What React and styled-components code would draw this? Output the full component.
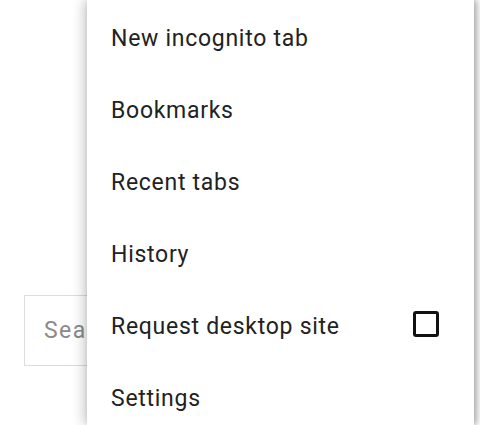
import styled, { createGlobalStyle } from "styled-components";

const GlobalStyle = createGlobalStyle`
  html, body {
    margin: 0;
    padding: 0;
    background: #fff;
    font-family: Roboto, "Noto Sans", sans-serif;
    overflow: hidden;
  }
`;

const Page = styled.div`
  position: relative;
  width: 480px;
  height: 425px;
  overflow: hidden;
  background: #fff;
`;

const SearchBox = styled.div`
  margin: 295px 0 0 24px;
  width: 300px;
  height: 71px;
  box-sizing: border-box;
  border: 1px solid #dcdcdc;
  display: flex;
  align-items: center;
  padding-left: 19px;
  font-size: 23px;
  letter-spacing: 1.4px;
  color: #8a8a8a;
`;

const Menu = styled.div`
  position: absolute;
  top: 0;
  left: 87px;
  width: 387px;
  height: 425px;
  background: #fff;
  box-shadow: -3px 0 12px rgba(0, 0, 0, 0.22), 3px 0 6px rgba(0, 0, 0, 0.28);
  display: flex;
  flex-direction: column;
  padding-top: 2px;
  box-sizing: border-box;
`;

const Item = styled.div`
  height: 72px;
  flex-shrink: 0;
  display: flex;
  align-items: center;
  justify-content: space-between;
  padding: 0 35px 0 24px;
  font-size: 23px;
  color: #222;
  letter-spacing: 0.72px;
`;

const Check = styled.span`
  width: 26px;
  height: 26px;
  box-sizing: border-box;
  border: 3px solid #111;
  border-radius: 3px;
  margin-top: -4px;
`;

const items = [
  "New incognito tab",
  "Bookmarks",
  "Recent tabs",
  "History",
  "Request desktop site",
  "Settings",
];

export default function App() {
  return (
    <Page>
      <GlobalStyle />
      <SearchBox>Search</SearchBox>
      <Menu>
        {items.map((label) => (
          <Item key={label}>
            {label}
            {label === "Request desktop site" && <Check />}
          </Item>
        ))}
      </Menu>
    </Page>
  );
}
